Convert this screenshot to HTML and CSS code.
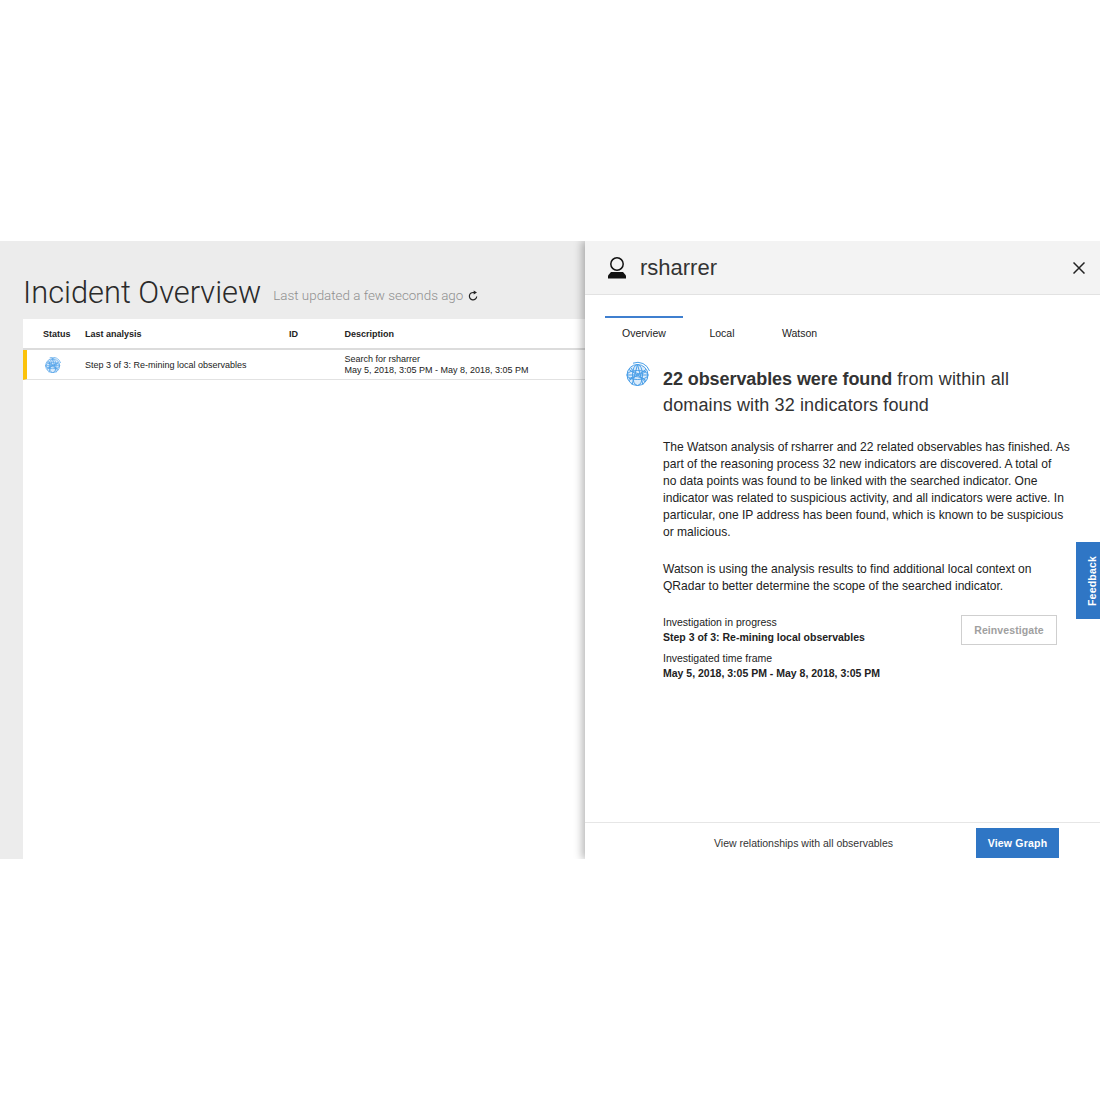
FILE: index.html
```html
<!DOCTYPE html>
<html lang="en">
<head>
<meta charset="utf-8">
<title>Incident Overview</title>
<link rel="stylesheet" href="styles.css">
</head>
<body>
<svg class="defs" width="0" height="0" aria-hidden="true">
  <symbol id="globe" viewBox="0 0 24 24">
    <g fill="none" stroke="#4a9fe8" stroke-width="1">
      <circle cx="11.500" cy="13" r="10.500" fill="#dcecfb"/>
      <ellipse cx="11.500" cy="13" rx="5" ry="10.500"/>
      <ellipse cx="11.500" cy="13" rx="10.500" ry="4.500"/>
      <path d="M3 7.500 20 18.500M3 18.500 20 7.500M11.500 2.500 6 23M11.500 2.500 17 23M1 13H22M5 6C8 12 16 14 20 9M3 17C8 13 16 14 19 20"/>
      <path d="M7 1.200A12.500 12.500 0 0 1 23.500 9"/>
    </g>
  </symbol>
</svg>
<main class="app">
  <section class="overview">
    <header class="overview-head">
      <h1 class="title">Incident Overview</h1>
      <span class="updated">Last updated a few seconds ago</span>
      <svg class="refresh" viewBox="0 0 12 12" width="11" height="12">
        <path d="M9.500 6.500A4 4 0 1 1 6.500 2.300" fill="none" stroke="#222" stroke-width="1.300"/>
        <path d="M6.200 0 9.800 2.200 6.200 4.400Z" fill="#222"/>
      </svg>
    </header>
    <div class="table">
      <div class="row row-head">
        <span class="col-status">Status</span>
        <span class="col-analysis">Last analysis</span>
        <span class="col-id">ID</span>
        <span class="col-desc">Description</span>
      </div>
      <div class="row row-item">
        <span class="col-status"><svg class="status-globe"><use href="#globe"/></svg></span>
        <span class="col-analysis">Step 3 of 3: Re-mining local observables</span>
        <span class="col-id"></span>
        <span class="col-desc">Search for rsharrer<br>May 5, 2018, 3:05 PM - May 8, 2018, 3:05 PM</span>
      </div>
    </div>
  </section>
  <aside class="panel">
    <header class="panel-head">
      <svg class="user-icon" viewBox="0 0 20 22" width="20" height="22">
        <circle cx="10" cy="7" r="6.200" fill="none" stroke="#111" stroke-width="1.500"/>
        <path d="M1 21.500v-3l3-3.500h12l3 3.500v3Z" fill="#111"/>
      </svg>
      <h2 class="panel-title">rsharrer</h2>
      <svg class="close" viewBox="0 0 12 12" width="12" height="12">
        <path d="M.5.500 11.500 11.500M11.500.500 .5 11.500" stroke="#222" stroke-width="1.500"/>
      </svg>
    </header>
    <nav class="tabs">
      <span class="tab tab-active">Overview</span>
      <span class="tab tab-local">Local</span>
      <span class="tab tab-watson">Watson</span>
    </nav>
    <div class="summary">
      <svg class="summary-globe"><use href="#globe"/></svg>
      <div class="summary-body">
        <h3 class="headline"><strong>22 observables were found</strong> from within all domains with 32 indicators found</h3>
        <p class="para">The Watson analysis of rsharrer and 22 related observables has finished. As<br>part of the reasoning process 32 new indicators are discovered. A total of<br>no data points was found to be linked with the searched indicator. One<br>indicator was related to suspicious activity, and all indicators were active. In<br>particular, one IP address has been found, which is known to be suspicious<br>or malicious.</p>
        <p class="para para-second">Watson is using the analysis results to find additional local context on QRadar to better determine the scope of the searched indicator.</p>
        <div class="status-block">
          <div class="facts">
            <div class="fact">
              <span>Investigation in progress</span>
              <strong>Step 3 of 3: Re-mining local observables</strong>
            </div>
            <div class="fact">
              <span>Investigated time frame</span>
              <strong>May 5, 2018, 3:05 PM - May 8, 2018, 3:05 PM</strong>
            </div>
          </div>
          <button class="btn-ghost" type="button">Reinvestigate</button>
        </div>
      </div>
    </div>
    <footer class="panel-foot">
      <span class="foot-text">View relationships with all observables</span>
      <button class="btn-primary" type="button">View Graph</button>
    </footer>
    <button class="feedback" type="button">Feedback</button>
  </aside>
</main>
</body>
</html>
```

FILE: styles.css
```css
* { box-sizing: border-box; }
html, body { margin: 0; padding: 0; background: #fff; }
body {
  height: 1100px;
  padding-top: 241px;
  font-family: "Liberation Sans", Arial, sans-serif;
  color: #222;
  overflow: hidden;
}
.defs { position: absolute; }
.app { display: flex; height: 618px; overflow: hidden; }

.overview {
  width: 585px;
  flex: none;
  padding-left: 23px;
  background: #ececec;
  display: flex;
  flex-direction: column;
}
.overview-head {
  height: 78px;
  padding-top: 26px;
  display: flex;
  align-items: center;
}
.title {
  margin: 0;
  font-family: Roboto, "Liberation Sans", sans-serif;
  font-size: 30.800px;
  line-height: 36px;
  font-weight: 300;
  color: #2a2a2a;
}
.updated { margin: 4px 0 0 12px; font-family: Roboto, "Liberation Sans", sans-serif; font-weight: 300; font-size: 13.400px; color: #8f8f8f; }
.refresh { margin: 5px 0 0 5px; }

.table { flex: 1; background: #fff; font-size: 9px; color: #222; }
.row { display: flex; align-items: center; }
.row-head { height: 31px; font-weight: 700; border-bottom: 2px solid #dcdcdc; padding-top: 1px; }
.row-item {
  height: 30px;
  border-bottom: 1px solid #e2e2e2;
  border-left: 4px solid #fbc20a;
  line-height: 11px;
}
.col-status { width: 62px; padding-left: 20px; flex: none; }
.col-analysis { width: 204px; flex: none; }
.col-id { width: 55.500px; flex: none; }
.col-desc { flex: 1; }
.row-item .col-status { width: 58px; padding-left: 18px; display: flex; }
.row-item .col-analysis { padding-top: 2px; }
.status-globe { width: 16px; height: 16px; }

.panel {
  width: 515px;
  flex: none;
  position: relative;
  background: #fff;
  box-shadow: -3px 0 8px rgba(0, 0, 0, .28);
  display: flex;
  flex-direction: column;
}
.panel-head {
  height: 54px;
  flex: none;
  background: #f3f3f3;
  border-bottom: 1px solid #e2e2e2;
  display: flex;
  align-items: center;
  padding: 0 15px 0 22px;
}
.user-icon { flex: none; }
.panel-title { margin: 0 0 0 13px; flex: 1; font-size: 22px; font-weight: 400; color: #333; }
.close { flex: none; }

.tabs { display: flex; padding: 21px 0 0 20px; height: 56px; flex: none; font-size: 10.500px; color: #222; }
.tab { line-height: 31px; text-align: center; }
.tab-active { width: 78px; border-top: 2px solid #3f7fcf; }
.tab-local { width: 78px; padding-top: 2px; }
.tab-watson { width: 77px; padding-top: 2px; }

.summary { flex: 1; display: flex; padding: 0 20px 0 41px; }
.summary-globe { width: 24px; height: 30px; flex: none; margin: 8px 13px 0 0; }
.summary-body { flex: 1; padding-top: 15px; }
.headline { margin: 0; font-size: 18px; line-height: 26px; font-weight: 400; color: #333; padding-right: 23px; letter-spacing: .12px; }
.headline strong { letter-spacing: -.08px; }
.para { margin: 21px 0 0; font-size: 12.050px; line-height: 17px; color: #222; }
.para-second { margin-top: 20px; padding-right: 23px; }
.status-block { display: flex; justify-content: space-between; align-items: flex-start; margin-top: 20px; padding-right: 23px; }
.facts { font-size: 10.500px; line-height: 15px; }
.fact { display: flex; flex-direction: column; margin-bottom: 6px; }
.fact strong { font-weight: 700; }
.btn-ghost {
  width: 96px;
  height: 30px;
  background: #fff;
  border: 1px solid #cfcfcf;
  color: #a0a0a0;
  font: 700 10.500px "Liberation Sans", Arial, sans-serif;
  letter-spacing: .1px;
  padding: 0;
}

.panel-foot {
  height: 37px;
  flex: none;
  border-top: 1px solid #e6e6e6;
  display: flex;
  align-items: flex-start;
  justify-content: flex-end;
  gap: 83px;
  padding: 5px 41px 0 0;
}
.foot-text { font-size: 10.500px; line-height: 30px; color: #333; }
.btn-primary {
  width: 83px;
  height: 30px;
  background: #2f76c5;
  border: 0;
  color: #fff;
  font: 700 10.500px "Liberation Sans", Arial, sans-serif;
  letter-spacing: .2px;
  padding: 0;
}
.feedback {
  position: absolute;
  right: 0;
  top: 301px;
  width: 24px;
  height: 77px;
  background: #2f76c5;
  border: 0;
  padding: 0 8px 0 0;
  color: #fff;
  font: 700 10.500px "Liberation Sans", Arial, sans-serif;
  letter-spacing: .2px;
  writing-mode: vertical-rl;
  transform: rotate(180deg);
  text-align: center;
}
```
